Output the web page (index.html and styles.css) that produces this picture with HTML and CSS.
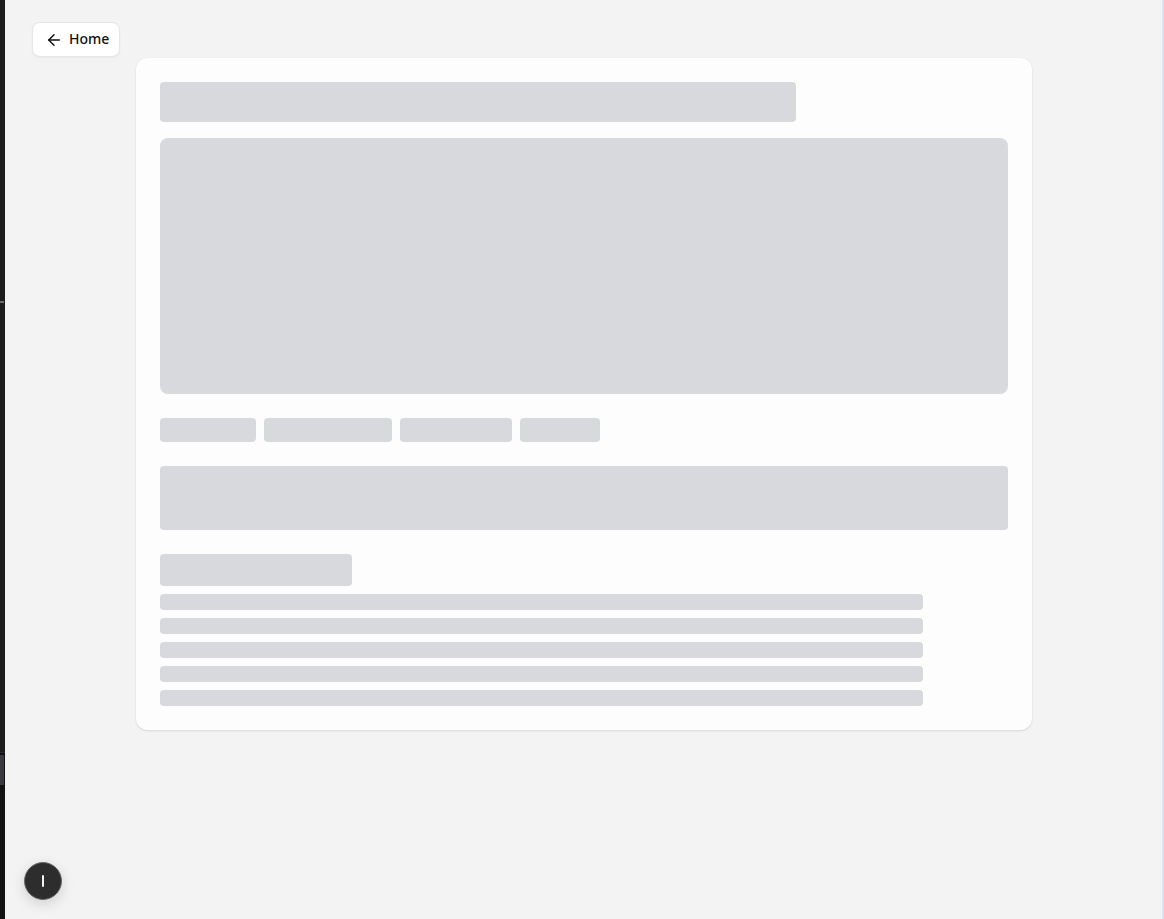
FILE: index.html
```html
<!DOCTYPE html>
<html lang="en">
<head>
<meta charset="utf-8">
<title>Loading</title>
<link rel="stylesheet" href="styles.css">
</head>
<body>
<div class="app">
  <aside class="rail-left">
    <div class="rail-mark"></div>
    <div class="rail-lower">
      <div class="rail-block"></div>
    </div>
  </aside>
  <main class="main">
    <a class="home-btn" href="#">
      <svg class="home-icon" viewBox="0 0 24 24" width="18" height="18" fill="none" stroke="currentColor" stroke-width="2" stroke-linecap="round" stroke-linejoin="round"><path d="M12 19l-7-7 7-7"/><path d="M19 12H5"/></svg>
      <span>Home</span>
    </a>
    <section class="card">
      <div class="sk sk-title"></div>
      <div class="sk sk-hero"></div>
      <div class="chips">
        <div class="sk chip chip-a"></div>
        <div class="sk chip chip-b"></div>
        <div class="sk chip chip-c"></div>
        <div class="sk chip chip-d"></div>
      </div>
      <div class="sk sk-box"></div>
      <div class="sk sk-heading"></div>
      <div class="lines">
        <div class="sk line"></div>
        <div class="sk line"></div>
        <div class="sk line"></div>
        <div class="sk line"></div>
        <div class="sk line"></div>
      </div>
    </section>
    <button class="fab" type="button"><span class="fab-bar"></span></button>
  </main>
  <aside class="rail-right"></aside>
</div>
</body>
</html>
```

FILE: styles.css
```css
* { box-sizing: border-box; }
html, body { margin: 0; padding: 0; height: 100%; }
body {
  background: #f3f3f3;
  font-family: "Noto Sans", "Open Sans", sans-serif;
  color: #111;
}
.app {
  display: flex;
  height: 919px;
  overflow: hidden;
}
.rail-left {
  width: 5px;
  flex: none;
  background: #1c1c1c;
  display: flex;
  flex-direction: column;
}
.rail-mark {
  margin-top: 301px;
  height: 2px;
  width: 4px;
  background: #6b6b6b;
}
.rail-lower {
  margin-top: 449px;
  flex: 1;
  background: #121212;
  border-top: 1px solid #2a2a2a;
  display: flex;
  flex-direction: column;
}
.rail-block {
  margin-top: 2px;
  height: 30px;
  width: 4px;
  background: #3a3a40;
}
.main {
  position: relative;
  flex: 1;
  min-width: 0;
  padding-top: 58px;
  display: flex;
  flex-direction: column;
  align-items: center;
}
.rail-right {
  width: 2px;
  flex: none;
  background: #dce5f8;
}
.home-btn {
  position: absolute;
  top: 22px;
  left: 27px;
  width: 88px;
  height: 35px;
  padding: 0 0 0 12px;
  display: flex;
  align-items: center;
  gap: 6px;
  background: #fff;
  border: 1px solid #e6e6e6;
  border-radius: 8px;
  box-shadow: 0 1px 2px rgba(0,0,0,0.05);
  color: #111;
  text-decoration: none;
  font-size: 14px;
  font-weight: 500;
  line-height: 1;
  white-space: nowrap;
}
.home-btn span { padding-bottom: 1px; }
.home-icon { display: block; flex: none; }
.card {
  width: 896px;
  background: #fdfdfd;
  border-radius: 12px;
  box-shadow: 0 1px 3px rgba(0,0,0,0.08), 0 1px 2px rgba(0,0,0,0.04);
  padding: 24px;
  display: flex;
  flex-direction: column;
}
.sk {
  background: #d7d9dd;
  border-radius: 4px;
}
.sk-title { width: 636px; height: 40px; }
.sk-hero { margin-top: 16px; height: 256px; border-radius: 8px; }
.chips {
  margin-top: 24px;
  display: flex;
  gap: 8px;
}
.chip { height: 24px; }
.chip-a { width: 96px; }
.chip-b { width: 128px; }
.chip-c { width: 112px; }
.chip-d { width: 80px; }
.sk-box { margin-top: 24px; height: 64px; }
.sk-heading { margin-top: 24px; width: 192px; height: 32px; }
.lines {
  margin-top: 8px;
  display: flex;
  flex-direction: column;
  gap: 8px;
}
.line { width: 90%; height: 16px; }
.fab {
  position: absolute;
  left: 19px;
  top: 862px;
  width: 38px;
  height: 38px;
  border-radius: 50%;
  background: #2d2d2d;
  border: 1.5px solid #6a6a6a;
  box-shadow: 0 4px 14px rgba(0,0,0,0.14);
  padding: 0;
  display: flex;
  align-items: center;
  justify-content: center;
}
.fab-bar {
  width: 2px;
  height: 12px;
  background: #f2f2f2;
  border-radius: 1px;
}
```
